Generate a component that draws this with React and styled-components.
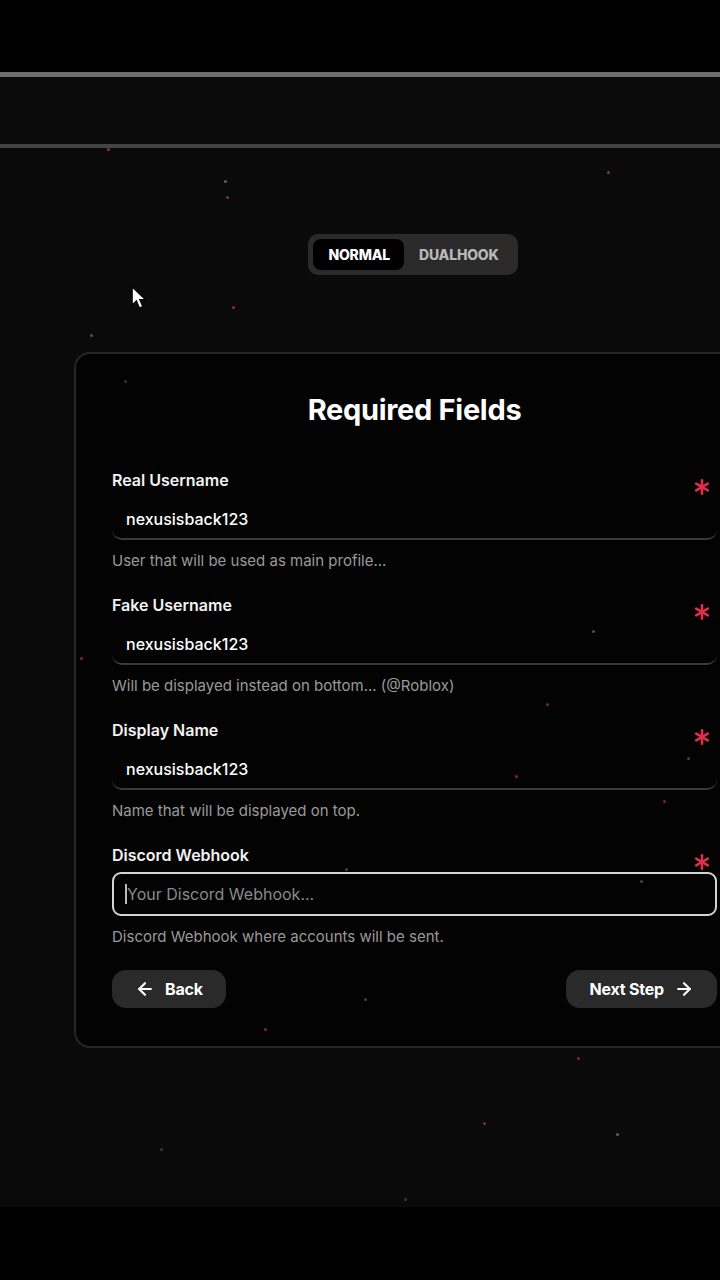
import React from 'react';
import styled, { createGlobalStyle } from 'styled-components';
import { ArrowLeft, ArrowRight } from 'lucide-react';

const GlobalStyle = createGlobalStyle`
  html, body {
    margin: 0;
    padding: 0;
    background: #000;
    overflow: hidden;
  }
  body {
    font-family: Inter, "Noto Sans", sans-serif;
    -webkit-font-smoothing: antialiased;
  }
  * { box-sizing: border-box; }
`;

const sparks = [
  [107, 0, '#b04050'], [224, 32, '#777'], [226, 48, '#a04050'], [607, 23, '#a04050'],
  [232, 158, '#c03040'], [90, 186, '#666'], [124, 232, '#444'], [80, 509, '#a03040'],
  [592, 482, '#666'], [546, 555, '#a03040'], [515, 627, '#b03040'], [663, 652, '#a03040'],
  [687, 609, '#555'], [345, 720, '#555'], [364, 850, '#555'], [264, 880, '#a03040'],
  [577, 909, '#a03040'], [483, 974, '#a03040'], [616, 985, '#777'], [404, 1050, '#444'],
  [640, 732, '#555'], [160, 1000, '#444'],
];

const fields = [
  { label: 'Real Username', value: 'nexusisback123', hint: 'User that will be used as main profile...' },
  { label: 'Fake Username', value: 'nexusisback123', hint: 'Will be displayed instead on bottom... (@Roblox)' },
  { label: 'Display Name', value: 'nexusisback123', hint: 'Name that will be displayed on top.' },
];

const Asterisk = () => (
  <Star viewBox="0 0 24 24" fill="none" stroke="#e3304a" strokeWidth="3" strokeLinecap="round">
    <path d="M12 4v16" />
    <path d="M19 8 5 16" />
    <path d="M5 8l14 8" />
  </Star>
);

const App = () => (
  <Page>
    <GlobalStyle />
    <Shade $h={72} />
    <Rule $tone="#6e6e6e" $h={5} />
    <Header />
    <Rule $tone="#434343" $h={4} />
    <Main>
      {sparks.map(([x, y, c], i) => (
        <Spark key={i} style={{ left: x, top: y, background: c }} />
      ))}
      <Pointer viewBox="0 0 14 22">
        <path d="M1 1v17l4-4 3 7 3-1.3-3-6.7h5.5z" fill="#fff" stroke="#000" strokeWidth="1" />
      </Pointer>

      <Column>
        <Toggle>
          <Tab $active>Normal</Tab>
          <Tab>Dualhook</Tab>
        </Toggle>

        <Card>
          <Title>Required Fields</Title>

          {fields.map((f) => (
            <Field key={f.label}>
              <Label>{f.label}</Label>
              <Asterisk />
              <LineInput defaultValue={f.value} />
              <Hint>{f.hint}</Hint>
            </Field>
          ))}

          <Field>
            <Label>Discord Webhook</Label>
            <Asterisk />
            <BoxWrap>
              <Caret />
              <BoxInput placeholder="Your Discord Webhook..." />
            </BoxWrap>
            <Hint>Discord Webhook where accounts will be sent.</Hint>
          </Field>

          <Actions>
            <Button>
              <ArrowLeft size={20} strokeWidth={2.6} />
              Back
            </Button>
            <Button>
              Next Step
              <ArrowRight size={20} strokeWidth={2.6} />
            </Button>
          </Actions>
        </Card>
      </Column>
    </Main>
    <Shade $h={73} />
  </Page>
);

const Page = styled.div`
  width: 720px;
  height: 1280px;
  display: flex;
  flex-direction: column;
  overflow: hidden;
`;

const Shade = styled.div`
  height: ${({ $h }) => $h}px;
  flex-shrink: 0;
  background: #000;
`;

const Rule = styled.div`
  height: ${({ $h }) => $h}px;
  flex-shrink: 0;
  background: ${({ $tone }) => $tone};
`;

const Header = styled.div`
  height: 67px;
  flex-shrink: 0;
  background: #0b0b0b;
`;

const Main = styled.main`
  position: relative;
  flex: 1;
  background: #0a0a0a;
  padding-top: 86px;
  overflow: hidden;
`;

const Spark = styled.span`
  position: absolute;
  width: 3px;
  height: 3px;
  border-radius: 50%;
  opacity: 0.8;
`;

const Pointer = styled.svg`
  position: absolute;
  left: 131px;
  top: 138px;
  width: 15px;
  height: 23px;
`;

const Column = styled.div`
  width: 678px;
  margin-left: 74px;
  display: flex;
  flex-direction: column;
  align-items: center;
  gap: 77px;
`;

const Toggle = styled.div`
  display: flex;
  align-items: center;
  padding: 5px;
  background: #2a2a2a;
  border-radius: 10px;
`;

const Tab = styled.div`
  height: 31px;
  display: flex;
  align-items: center;
  padding: 0 14px 0 15px;
  border-radius: 8px;
  background: ${({ $active }) => ($active ? '#000' : 'transparent')};
  color: ${({ $active }) => ($active ? '#fff' : '#b8b8b8')};
  font-size: 14px;
  font-weight: 800;
  letter-spacing: -0.2px;
  text-transform: uppercase;
`;

const Card = styled.section`
  width: 100%;
  background: #030303;
  border: 2px solid #262626;
  border-radius: 16px;
  padding: 38px 33px 38px 36px;
  display: flex;
  flex-direction: column;
`;

const Title = styled.h1`
  margin: 0 0 42px;
  text-align: center;
  color: #fff;
  font-size: 29px;
  line-height: 36px;
  font-weight: 700;
  letter-spacing: -0.3px;
`;

const Field = styled.div`
  position: relative;
  display: flex;
  flex-direction: column;
  margin-bottom: 25px;
`;

const Label = styled.label`
  color: #f2f2f2;
  font-size: 16px;
  line-height: 20px;
  font-weight: 600;
  margin-bottom: 10px;
`;

const Star = styled.svg`
  position: absolute;
  right: 5px;
  top: 7px;
  width: 20px;
  height: 20px;
`;

const LineInput = styled.input`
  height: 40px;
  padding: 0 14px;
  background: transparent;
  border: none;
  border-bottom: 2px solid #3a3a3a;
  border-radius: 10px;
  color: #fff;
  font-family: inherit;
  font-size: 16px;
  font-weight: 500;
  outline: none;
`;

const BoxWrap = styled.div`
  position: relative;
  margin-top: -3px;
`;

const Caret = styled.span`
  position: absolute;
  left: 13px;
  top: 12px;
  width: 1.5px;
  height: 20px;
  background: #bbb;
`;

const BoxInput = styled.input`
  width: 100%;
  height: 44px;
  padding: 0 13px;
  background: transparent;
  border: 2px solid #d4d4d4;
  border-radius: 9px;
  color: #fff;
  font-family: inherit;
  font-size: 16px;
  outline: none;

  &::placeholder {
    color: #8a8a8a;
  }
`;

const Hint = styled.p`
  margin: 12px 0 0;
  color: #9a9a9a;
  font-size: 15px;
  line-height: 18px;
`;

const Actions = styled.div`
  display: flex;
  justify-content: space-between;
  margin-top: -1px;
`;

const Button = styled.button`
  height: 38px;
  display: flex;
  align-items: center;
  gap: 10px;
  padding: 0 23px;
  background: #2a2a2a;
  border: none;
  border-radius: 14px;
  color: #fff;
  font-family: inherit;
  font-size: 16px;
  font-weight: 700;
  letter-spacing: -0.2px;
`;

export default App;
